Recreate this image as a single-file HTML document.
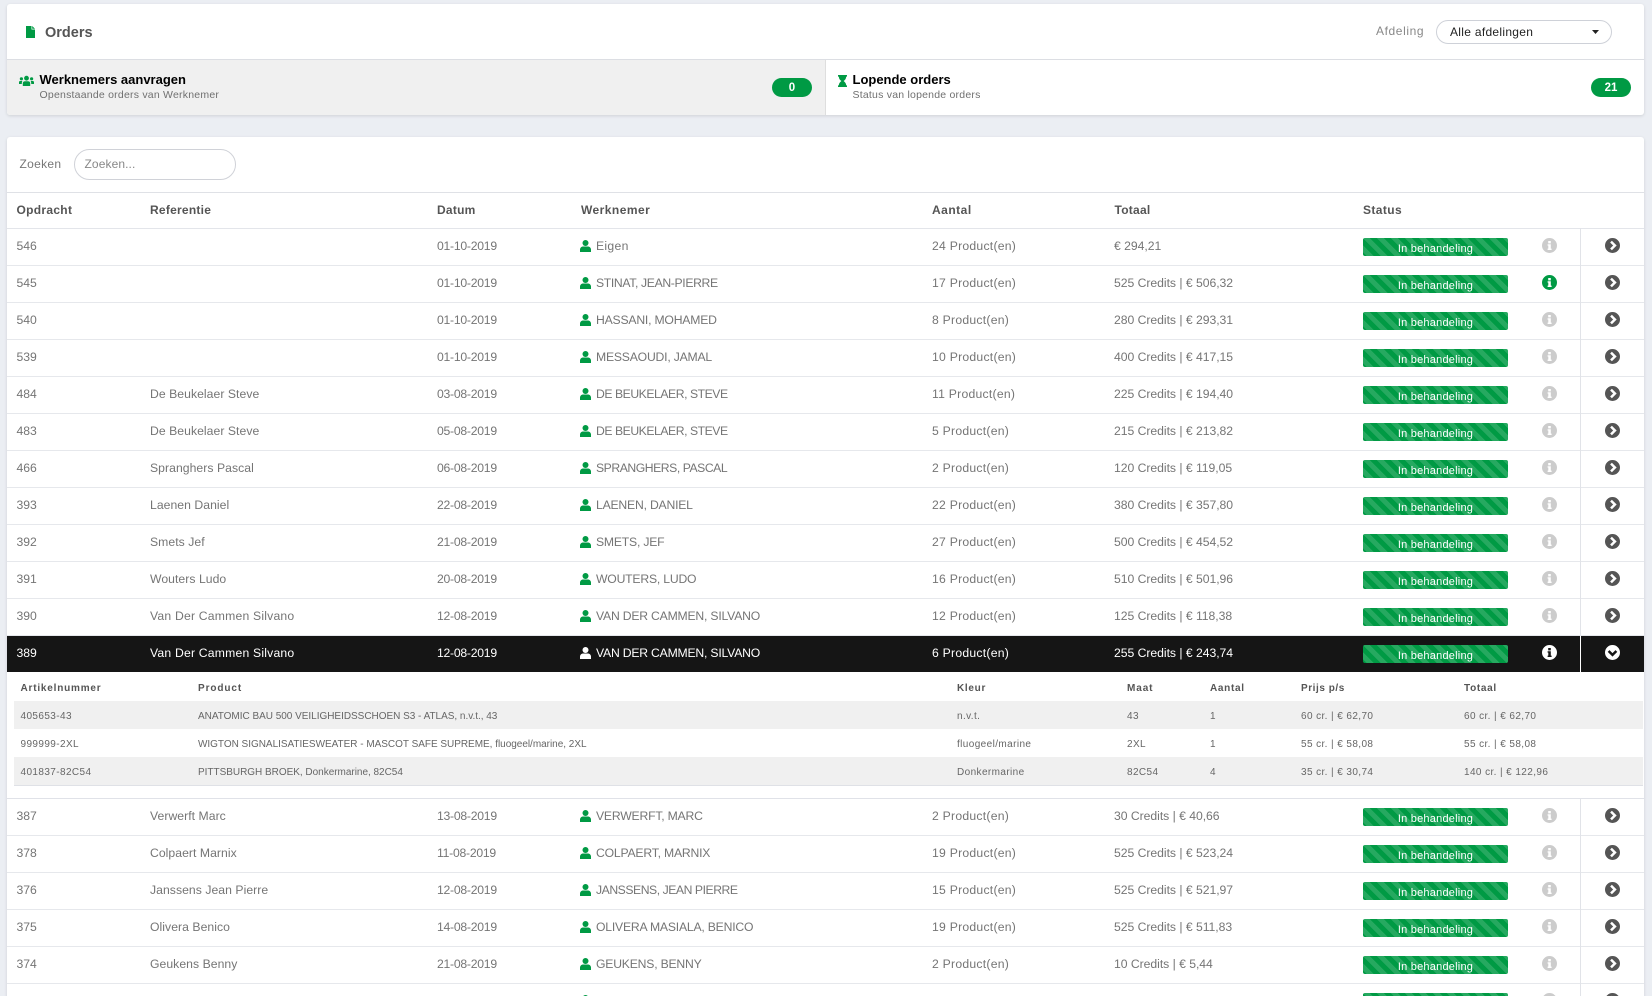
<!DOCTYPE html>
<html lang="nl"><head><meta charset="utf-8"><title>Orders</title>
<style>
*{box-sizing:border-box}
html,body{margin:0;padding:0;width:1652px;height:996px;overflow:hidden;background:#ebeef3;font-family:"Liberation Sans",sans-serif;color:#666}
#w{position:relative;width:1652px;height:996px;overflow:hidden;background:#ebeef3}
.abs{position:absolute;white-space:nowrap}
.card{position:absolute;left:7px;width:1637px;background:#fff;border-radius:3px;box-shadow:0 1px 3px rgba(0,0,0,.12)}
.g{fill:#009a44}
.title{font-size:13px;font-weight:bold;color:#000;letter-spacing:0;line-height:16px}
.sub{font-size:10.5px;color:#707070;letter-spacing:.22px;line-height:12px}
.pill{position:absolute;top:78px;height:19px;border-radius:10px;background:#009a44;color:#fff;font-size:11.5px;font-weight:bold;line-height:20px;text-align:center;width:40px}
.hd{position:absolute;top:203px;font-size:12px;font-weight:bold;color:#555;line-height:14px;letter-spacing:.25px}
.line{position:absolute;left:7px;width:1637px;height:1px;background:#e3e5ea}
.r{position:absolute;left:7px;width:1637px;height:37px;border-bottom:1px solid #e6e8ec;font-size:12.2px;line-height:34px;color:#757575;background:#fff}
.r span,.r svg,.r b{position:absolute;white-space:nowrap}
.r b{font-weight:normal}
.a{left:9.5px}.b{left:143px;letter-spacing:.05px}.c{left:430px;letter-spacing:-.25px}.d{left:589px;letter-spacing:-.2px}.e{left:925px;letter-spacing:.25px}.f{left:1107px;letter-spacing:-.03px}
.u{left:573px;top:11px;width:11px;height:12px}
.s{left:1356px;top:9px;width:145px;height:18px;border-radius:2px;color:#fff;font-size:11px;line-height:22px;text-align:center;letter-spacing:.22px;background-color:#009a44;background-image:linear-gradient(45deg,rgba(255,255,255,.15) 25%,transparent 25%,transparent 50%,rgba(255,255,255,.15) 50%,rgba(255,255,255,.15) 75%,transparent 75%,transparent);background-size:14px 14px}
.i{left:1534.5px;top:9px;width:15px;height:15px}
.v{left:1573px;top:-1px;width:1px;height:37px;background:#e1e3e8}
.n{left:1597.5px;top:9px;width:15px;height:15px}
.dark{background:#151515;color:#fff;border-bottom:0;height:36px}
.dark .v{background:#fff;top:0;height:36px}
.dh{position:absolute;top:682px;font-size:10px;font-weight:bold;color:#555;line-height:14px;letter-spacing:.7px}
.dr{position:absolute;left:14px;width:1629px;height:28px;line-height:31px;font-size:10px;color:#666}
.dr span{position:absolute;white-space:nowrap;letter-spacing:.4px}
.alt{background:#f0f0f0}
.dr .p2{letter-spacing:-.02px}
.p1{left:6.5px}.p2{left:184px}.p3{left:943px}.p4{left:1113px}.p5{left:1196px}.p6{left:1287px}.p7{left:1450px}
</style></head><body>
<svg width="0" height="0" style="position:absolute">
<symbol id="user" viewBox="0 0 11 12"><circle cx="5.5" cy="3" r="3" fill="currentColor"/><path d="M0 12V9.6C0 7.8 1.4 6.5 3.2 6.5H7.8C9.6 6.5 11 7.8 11 9.6V12Z" fill="currentColor"/></symbol>
<symbol id="info" viewBox="0 0 15 15"><circle cx="7.5" cy="7.5" r="7.5" fill="currentColor"/><rect x="6.2" y="3" width="2.6" height="2.4" fill="#fff"/><path d="M5.6 6.2H8.8V10.6H9.6V12H5.6V10.6H6.3V7.6H5.6Z" fill="#fff"/></symbol>
<symbol id="next" viewBox="0 0 15 15"><circle cx="7.5" cy="7.5" r="7.5" fill="#555"/><path d="M6 3.6L9.9 7.5L6 11.4" fill="none" stroke="#fff" stroke-width="2.5"/></symbol>
</svg>
<div id="w">
<div class="card" style="top:4px;height:111px"></div>
<svg class="abs" style="left:26px;top:26px" width="9" height="12" viewBox="0 0 9 12"><path class="g" d="M0 0H5.5V3.5H9V12H0ZM6.2 0L9 2.8H6.2Z"/></svg>
<div class="abs" style="left:45px;top:24px;font-size:14.5px;font-weight:bold;color:#555;line-height:18px">Orders</div>
<div class="abs" style="left:1376px;top:24px;font-size:12px;color:#888;line-height:14px;letter-spacing:.6px">Afdeling</div>
<div class="abs" style="left:1436px;top:20px;width:176px;height:24px;border:1px solid #ced1d8;border-radius:12px;background:#fff"></div>
<div class="abs" style="left:1450px;top:25px;font-size:12px;color:#222;line-height:15px;letter-spacing:.3px">Alle afdelingen</div>
<svg class="abs" style="left:1592px;top:30px" width="7" height="4"><path d="M0 0H7L3.5 4Z" fill="#222"/></svg>
<div class="abs" style="left:7px;top:59px;width:1637px;height:1px;background:#dcdee3"></div>
<div class="abs" style="left:7px;top:60px;width:819px;height:55px;background:#f0f0f0;border-right:1px solid #dedede;border-radius:0 0 0 3px"></div>
<svg class="abs" style="left:19px;top:75px" width="15" height="11" viewBox="0 0 15 11"><g class="g"><circle cx="7.5" cy="3.2" r="2.4"/><path d="M3.8 11V8.2C3.8 7 4.8 6.2 6 6.2H9C10.2 6.2 11.2 7 11.2 8.2V11Z"/><circle cx="2.4" cy="3.8" r="1.6"/><circle cx="12.6" cy="3.8" r="1.6"/><path d="M0 9V7.2C0 6.4.6 6 1.2 6H3.4C2.9 6.6 2.8 7.4 2.8 9Z"/><path d="M15 9V7.2C15 6.4 14.4 6 13.8 6H11.6C12.1 6.6 12.2 7.4 12.2 9Z"/></g></svg>
<div class="abs title" style="left:39.5px;top:72px">Werknemers aanvragen</div>
<div class="abs sub" style="left:39.5px;top:89px">Openstaande orders van Werknemer</div>
<div class="pill" style="left:772px">0</div>
<svg class="abs" style="left:838px;top:75px" width="9" height="12" viewBox="0 0 9 12"><path class="g" d="M0 0H9V1.6H8.2C8.2 3.6 7 5 5.6 6C7 7 8.2 8.4 8.2 10.4H9V12H0V10.4H.8C.8 8.4 2 7 3.4 6C2 5 .8 3.6 .8 1.6H0Z"/></svg>
<div class="abs title" style="left:852.5px;top:72px">Lopende orders</div>
<div class="abs sub" style="left:852.5px;top:89px">Status van lopende orders</div>
<div class="pill" style="left:1591px">21</div>

<div class="card" style="top:137px;height:870px"></div>
<div class="abs" style="left:19.5px;top:157px;font-size:12px;color:#777;line-height:14px;letter-spacing:.3px">Zoeken</div>
<div class="abs" style="left:74px;top:149px;width:162px;height:31px;border:1px solid #d0d2d8;border-radius:16px;background:#fff"></div>
<div class="abs" style="left:84.5px;top:157px;font-size:12px;color:#888;line-height:14px;letter-spacing:.1px">Zoeken...</div>
<div class="line" style="top:192px;background:#dfe1e6"></div>
<div class="hd" style="left:16.5px;letter-spacing:.3px">Opdracht</div>
<div class="hd" style="left:150px">Referentie</div>
<div class="hd" style="left:437px">Datum</div>
<div class="hd" style="left:581px;letter-spacing:.45px">Werknemer</div>
<div class="hd" style="left:932px;letter-spacing:.5px">Aantal</div>
<div class="hd" style="left:1114.5px">Totaal</div>
<div class="hd" style="left:1363px;letter-spacing:.4px">Status</div>
<div class="line" style="top:228px"></div>

<div class="r" style="top:229px"><span class="a">546</span><span class="c">01-10-2019</span><svg class="u" style="color:#009a44"><use href="#user"/></svg><span class="d" style="letter-spacing:.3px">Eigen</span><span class="e">24 Product(en)</span><span class="f">€ 294,21</span><span class="s">In behandeling</span><svg class="i" style="color:#ccc"><use href="#info"/></svg><b class="v"></b><svg class="n"><use href="#next"/></svg></div>
<div class="r" style="top:266px"><span class="a">545</span><span class="c">01-10-2019</span><svg class="u" style="color:#009a44"><use href="#user"/></svg><span class="d" style="letter-spacing:-.35px">STINAT, JEAN-PIERRE</span><span class="e">17 Product(en)</span><span class="f">525 Credits | € 506,32</span><span class="s">In behandeling</span><svg class="i" style="color:#009a44"><use href="#info"/></svg><b class="v"></b><svg class="n"><use href="#next"/></svg></div>
<div class="r" style="top:303px"><span class="a">540</span><span class="c">01-10-2019</span><svg class="u" style="color:#009a44"><use href="#user"/></svg><span class="d">HASSANI, MOHAMED</span><span class="e">8 Product(en)</span><span class="f">280 Credits | € 293,31</span><span class="s">In behandeling</span><svg class="i" style="color:#ccc"><use href="#info"/></svg><b class="v"></b><svg class="n"><use href="#next"/></svg></div>
<div class="r" style="top:340px"><span class="a">539</span><span class="c">01-10-2019</span><svg class="u" style="color:#009a44"><use href="#user"/></svg><span class="d">MESSAOUDI, JAMAL</span><span class="e">10 Product(en)</span><span class="f">400 Credits | € 417,15</span><span class="s">In behandeling</span><svg class="i" style="color:#ccc"><use href="#info"/></svg><b class="v"></b><svg class="n"><use href="#next"/></svg></div>
<div class="r" style="top:377px"><span class="a">484</span><span class="b">De Beukelaer Steve</span><span class="c">03-08-2019</span><svg class="u" style="color:#009a44"><use href="#user"/></svg><span class="d" style="letter-spacing:-.45px">DE BEUKELAER, STEVE</span><span class="e">11 Product(en)</span><span class="f">225 Credits | € 194,40</span><span class="s">In behandeling</span><svg class="i" style="color:#ccc"><use href="#info"/></svg><b class="v"></b><svg class="n"><use href="#next"/></svg></div>
<div class="r" style="top:414px"><span class="a">483</span><span class="b">De Beukelaer Steve</span><span class="c">05-08-2019</span><svg class="u" style="color:#009a44"><use href="#user"/></svg><span class="d" style="letter-spacing:-.45px">DE BEUKELAER, STEVE</span><span class="e">5 Product(en)</span><span class="f">215 Credits | € 213,82</span><span class="s">In behandeling</span><svg class="i" style="color:#ccc"><use href="#info"/></svg><b class="v"></b><svg class="n"><use href="#next"/></svg></div>
<div class="r" style="top:451px"><span class="a">466</span><span class="b">Spranghers Pascal</span><span class="c">06-08-2019</span><svg class="u" style="color:#009a44"><use href="#user"/></svg><span class="d" style="letter-spacing:-.45px">SPRANGHERS, PASCAL</span><span class="e">2 Product(en)</span><span class="f">120 Credits | € 119,05</span><span class="s">In behandeling</span><svg class="i" style="color:#ccc"><use href="#info"/></svg><b class="v"></b><svg class="n"><use href="#next"/></svg></div>
<div class="r" style="top:488px"><span class="a">393</span><span class="b">Laenen Daniel</span><span class="c">22-08-2019</span><svg class="u" style="color:#009a44"><use href="#user"/></svg><span class="d">LAENEN, DANIEL</span><span class="e">22 Product(en)</span><span class="f">380 Credits | € 357,80</span><span class="s">In behandeling</span><svg class="i" style="color:#ccc"><use href="#info"/></svg><b class="v"></b><svg class="n"><use href="#next"/></svg></div>
<div class="r" style="top:525px"><span class="a">392</span><span class="b">Smets Jef</span><span class="c">21-08-2019</span><svg class="u" style="color:#009a44"><use href="#user"/></svg><span class="d">SMETS, JEF</span><span class="e">27 Product(en)</span><span class="f">500 Credits | € 454,52</span><span class="s">In behandeling</span><svg class="i" style="color:#ccc"><use href="#info"/></svg><b class="v"></b><svg class="n"><use href="#next"/></svg></div>
<div class="r" style="top:562px"><span class="a">391</span><span class="b">Wouters Ludo</span><span class="c">20-08-2019</span><svg class="u" style="color:#009a44"><use href="#user"/></svg><span class="d">WOUTERS, LUDO</span><span class="e">16 Product(en)</span><span class="f">510 Credits | € 501,96</span><span class="s">In behandeling</span><svg class="i" style="color:#ccc"><use href="#info"/></svg><b class="v"></b><svg class="n"><use href="#next"/></svg></div>
<div class="r" style="top:599px"><span class="a">390</span><span class="b" style="letter-spacing:.2px">Van Der Cammen Silvano</span><span class="c">12-08-2019</span><svg class="u" style="color:#009a44"><use href="#user"/></svg><span class="d">VAN DER CAMMEN, SILVANO</span><span class="e">12 Product(en)</span><span class="f">125 Credits | € 118,38</span><span class="s">In behandeling</span><svg class="i" style="color:#ccc"><use href="#info"/></svg><b class="v"></b><svg class="n"><use href="#next"/></svg></div>

<div class="r dark" style="top:636px"><span class="a">389</span><span class="b" style="letter-spacing:.2px">Van Der Cammen Silvano</span><span class="c">12-08-2019</span><svg class="u" style="color:#fff"><use href="#user"/></svg><span class="d">VAN DER CAMMEN, SILVANO</span><span class="e">6 Product(en)</span><span class="f">255 Credits | € 243,74</span><span class="s">In behandeling</span><svg class="i" viewBox="0 0 15 15"><circle cx="7.5" cy="7.5" r="7.5" fill="#fff"/><rect x="6.2" y="3" width="2.6" height="2.4" fill="#151515"/><path d="M5.6 6.2H8.8V10.6H9.6V12H5.6V10.6H6.3V7.6H5.6Z" fill="#151515"/></svg><b class="v"></b><svg class="n" viewBox="0 0 15 15"><circle cx="7.5" cy="7.5" r="7.5" fill="#fff"/><path d="M3.6 6L7.5 9.9L11.4 6" fill="none" stroke="#151515" stroke-width="2.5"/></svg></div>

<div class="abs" style="left:7px;top:672px;width:1637px;height:126px;background:#fff"></div>
<div class="dh" style="left:20.5px;letter-spacing:.8px">Artikelnummer</div>
<div class="dh" style="left:198px;letter-spacing:.9px">Product</div>
<div class="dh" style="left:957px">Kleur</div>
<div class="dh" style="left:1127px;letter-spacing:.9px">Maat</div>
<div class="dh" style="left:1210px">Aantal</div>
<div class="dh" style="left:1301px;letter-spacing:.55px">Prijs p/s</div>
<div class="dh" style="left:1464px">Totaal</div>
<div class="dr alt" style="top:701px"><span class="p1">405653-43</span><span class="p2">ANATOMIC BAU 500 VEILIGHEIDSSCHOEN S3 - ATLAS, n.v.t., 43</span><span class="p3">n.v.t.</span><span class="p4">43</span><span class="p5">1</span><span class="p6">60 cr. | € 62,70</span><span class="p7">60 cr. | € 62,70</span></div>
<div class="dr" style="top:729px"><span class="p1">999999-2XL</span><span class="p2">WIGTON SIGNALISATIESWEATER - MASCOT SAFE SUPREME, fluogeel/marine, 2XL</span><span class="p3">fluogeel/marine</span><span class="p4">2XL</span><span class="p5">1</span><span class="p6">55 cr. | € 58,08</span><span class="p7">55 cr. | € 58,08</span></div>
<div class="dr alt" style="top:757px"><span class="p1">401837-82C54</span><span class="p2">PITTSBURGH BROEK, Donkermarine, 82C54</span><span class="p3">Donkermarine</span><span class="p4">82C54</span><span class="p5">4</span><span class="p6">35 cr. | € 30,74</span><span class="p7">140 cr. | € 122,96</span></div>
<div class="abs" style="left:14px;top:785px;width:1629px;height:1px;background:#dfe1e6"></div>
<div class="line" style="top:798px;background:#e0e2e8"></div>

<div class="r" style="top:799px"><span class="a">387</span><span class="b">Verwerft Marc</span><span class="c">13-08-2019</span><svg class="u" style="color:#009a44"><use href="#user"/></svg><span class="d">VERWERFT, MARC</span><span class="e">2 Product(en)</span><span class="f">30 Credits | € 40,66</span><span class="s">In behandeling</span><svg class="i" style="color:#ccc"><use href="#info"/></svg><b class="v"></b><svg class="n"><use href="#next"/></svg></div>
<div class="r" style="top:836px"><span class="a">378</span><span class="b">Colpaert Marnix</span><span class="c">11-08-2019</span><svg class="u" style="color:#009a44"><use href="#user"/></svg><span class="d">COLPAERT, MARNIX</span><span class="e">19 Product(en)</span><span class="f">525 Credits | € 523,24</span><span class="s">In behandeling</span><svg class="i" style="color:#ccc"><use href="#info"/></svg><b class="v"></b><svg class="n"><use href="#next"/></svg></div>
<div class="r" style="top:873px"><span class="a">376</span><span class="b">Janssens Jean Pierre</span><span class="c">12-08-2019</span><svg class="u" style="color:#009a44"><use href="#user"/></svg><span class="d" style="letter-spacing:-.45px">JANSSENS, JEAN PIERRE</span><span class="e">15 Product(en)</span><span class="f">525 Credits | € 521,97</span><span class="s">In behandeling</span><svg class="i" style="color:#ccc"><use href="#info"/></svg><b class="v"></b><svg class="n"><use href="#next"/></svg></div>
<div class="r" style="top:910px"><span class="a">375</span><span class="b">Olivera Benico</span><span class="c">14-08-2019</span><svg class="u" style="color:#009a44"><use href="#user"/></svg><span class="d">OLIVERA MASIALA, BENICO</span><span class="e">19 Product(en)</span><span class="f">525 Credits | € 511,83</span><span class="s">In behandeling</span><svg class="i" style="color:#ccc"><use href="#info"/></svg><b class="v"></b><svg class="n"><use href="#next"/></svg></div>
<div class="r" style="top:947px"><span class="a">374</span><span class="b">Geukens Benny</span><span class="c">21-08-2019</span><svg class="u" style="color:#009a44"><use href="#user"/></svg><span class="d">GEUKENS, BENNY</span><span class="e">2 Product(en)</span><span class="f">10 Credits | € 5,44</span><span class="s">In behandeling</span><svg class="i" style="color:#ccc"><use href="#info"/></svg><b class="v"></b><svg class="n"><use href="#next"/></svg></div>
<div class="r" style="top:984px"><svg class="u" style="color:#009a44"><use href="#user"/></svg><span class="s"></span><svg class="i" style="color:#ccc"><use href="#info"/></svg><b class="v"></b><svg class="n"><use href="#next"/></svg></div>
</div>
</body></html>
